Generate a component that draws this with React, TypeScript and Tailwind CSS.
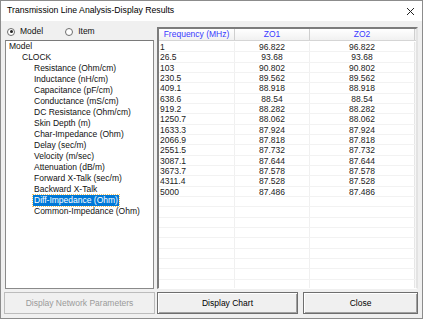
import React from "react";

const treeItems: { label: string; indent: number; selected?: boolean }[] = [
  { label: "Model", indent: 0 },
  { label: "CLOCK", indent: 1 },
  { label: "Resistance (Ohm/cm)", indent: 2 },
  { label: "Inductance (nH/cm)", indent: 2 },
  { label: "Capacitance (pF/cm)", indent: 2 },
  { label: "Conductance (mS/cm)", indent: 2 },
  { label: "DC Resistance (Ohm/cm)", indent: 2 },
  { label: "Skin Depth (m)", indent: 2 },
  { label: "Char-Impedance (Ohm)", indent: 2 },
  { label: "Delay (sec/m)", indent: 2 },
  { label: "Velocity (m/sec)", indent: 2 },
  { label: "Attenuation (dB/m)", indent: 2 },
  { label: "Forward X-Talk (sec/m)", indent: 2 },
  { label: "Backward X-Talk", indent: 2 },
  { label: "Diff-Impedance (Ohm)", indent: 2, selected: true },
  { label: "Common-Impedance (Ohm)", indent: 2 },
];

const rows: [string, string, string][] = [
  ["1", "96.822", "96.822"],
  ["26.5", "93.68", "93.68"],
  ["103", "90.802", "90.802"],
  ["230.5", "89.562", "89.562"],
  ["409.1", "88.918", "88.918"],
  ["638.6", "88.54", "88.54"],
  ["919.2", "88.282", "88.282"],
  ["1250.7", "88.062", "88.062"],
  ["1633.3", "87.924", "87.924"],
  ["2066.9", "87.818", "87.818"],
  ["2551.5", "87.732", "87.732"],
  ["3087.1", "87.644", "87.644"],
  ["3673.7", "87.578", "87.578"],
  ["4311.4", "87.528", "87.528"],
  ["5000", "87.486", "87.486"],
];

function Radio({ checked, label }: { checked?: boolean; label: string }) {
  return (
    <div className="flex items-center gap-[5px]">
      <div className="w-[8px] h-[8px] rounded-full border border-[#6d6d6d] bg-white flex items-center justify-center">
        {checked && <div className="w-[3px] h-[3px] rounded-full bg-[#222]" />}
      </div>
      <span>{label}</span>
    </div>
  );
}

export default function App() {
  const indentClass = ["pl-[2px]", "pl-[15px]", "pl-[27px]"];
  const emptyRows = Array.from({ length: 9 });

  return (
    <div
      className="w-[423px] h-[319px] bg-[#f0f0f0] border border-[#8c8c8c] flex flex-col text-[8.5px] text-[#111]"
      style={{ fontFamily: '"Liberation Sans", Arial, sans-serif' }}
    >
      {/* title bar */}
      <div className="h-[20px] bg-white flex items-center justify-between pl-[6px] pr-[6px] shrink-0">
        <span className="text-[8.7px] text-black">Transmission Line Analysis-Display Results</span>
        <svg width="9" height="9" viewBox="0 0 9 9" className="mr-[1px]">
          <path d="M1 1 L8 8 M8 1 L1 8" stroke="#222" strokeWidth="1" />
        </svg>
      </div>

      <div className="flex px-[4px] gap-[3px] h-[268px] shrink-0">
        {/* left column */}
        <div className="w-[149px] flex flex-col">
          <div className="h-[19px] flex items-center gap-[22px] pl-[2px] pt-[2px]">
            <Radio checked label="Model" />
            <Radio label="Item" />
          </div>
          <div className="flex-1 bg-white border border-[#8a8a8a] border-t-[#7a7a7a]">
            {treeItems.map((item) => (
              <div key={item.label} className={`h-[11px] leading-[11px] ${indentClass[item.indent]}`}>
                <span
                  className={
                    item.selected
                      ? "inline-block bg-[#0078d7] text-white px-[1px] outline outline-1 outline-dotted outline-[#f0c060]"
                      : "px-[1px]"
                  }
                >
                  {item.label}
                </span>
              </div>
            ))}
          </div>
        </div>

        {/* table */}
        <div className="flex-1 mt-[6px] border-l-2 border-t-2 border-l-[#7c7c7c] border-t-[#7c7c7c] border-r-2 border-r-[#e3e3e3] border-b border-b-white bg-white flex flex-col overflow-hidden">
          <div className="flex h-[12px] shrink-0 bg-gradient-to-b from-white to-[#f1f1f1] border-b border-[#d5d5d5] text-[#3a3aff]">
            <div className="w-[76px] flex items-center justify-center border-r border-[#cfcfcf]">Frequency (MHz)</div>
            <div className="w-[75px] flex items-center justify-center border-r border-[#cfcfcf]">ZO1</div>
            <div className="w-[105px] flex items-center justify-center border-r border-[#cfcfcf]">ZO2</div>
            <div className="flex-1 bg-[#f0f0f0]" />
          </div>
          <div className="pt-[1px] text-[#222]">
            {rows.map(([f, a, b]) => (
              <div key={f} className="flex h-[10.33px] leading-[10.33px] border-b border-[#f2f2f2]">
                <div className="w-[76px] pl-[1px] border-r border-[#f0f0f0]">{f}</div>
                <div className="w-[75px] text-center border-r border-[#f0f0f0]">{a}</div>
                <div className="w-[105px] text-center border-r border-[#e6e6e6]">{b}</div>
                <div className="flex-1 bg-[#f7f7f7]" />
              </div>
            ))}
            {emptyRows.map((_, i) => (
              <div key={i} className="flex h-[10.33px] border-b border-[#f2f2f2]">
                <div className="w-[76px] border-r border-[#f0f0f0]" />
                <div className="w-[75px] border-r border-[#f0f0f0]" />
                <div className="w-[105px] border-r border-[#e6e6e6]" />
                <div className="flex-1 bg-[#f7f7f7]" />
              </div>
            ))}
          </div>
        </div>
      </div>

      {/* buttons */}
      <div className="flex pl-[3px] mt-[3px] h-[22px] shrink-0">
        <div className="w-[151px] flex items-center justify-center border border-[#bcbcbc] bg-[#f0f0f0] text-[#9a9a9a]">
          Display Network Parameters
        </div>
        <div className="w-[141px] ml-[2px] flex items-center justify-center border border-[#6e6e6e] bg-[#f0f0f0] shadow-[inset_1px_1px_0_#ffffff,inset_-1px_-1px_0_#a0a0a0] text-black">
          Display Chart
        </div>
        <div className="w-[115px] ml-[5px] flex items-center justify-center border border-[#6e6e6e] bg-[#f0f0f0] shadow-[inset_1px_1px_0_#ffffff,inset_-1px_-1px_0_#a0a0a0] text-black">
          Close
        </div>
      </div>
    </div>
  );
}
